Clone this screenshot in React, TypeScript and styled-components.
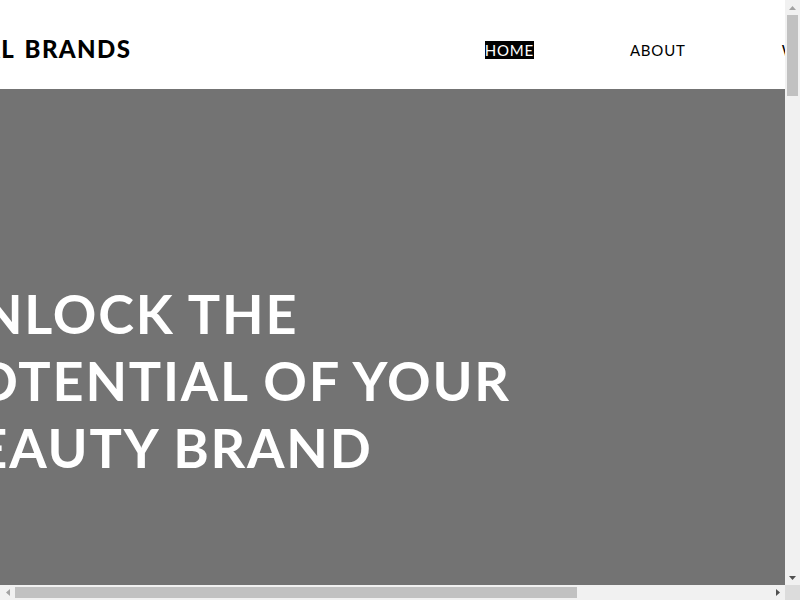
import styled, { createGlobalStyle } from 'styled-components'

const GlobalStyle = createGlobalStyle`
  html, body {
    margin: 0;
    padding: 0;
    overflow: hidden;
  }
  body {
    font-family: Lato, "Liberation Sans", sans-serif;
    color: #000;
    background: #fff;
  }
`

// window frame: page area plus the classic scrollbars
const Frame = styled.div`
  width: 100vw;
  height: 100vh;
  display: grid;
  grid-template-columns: 1fr 15px;
  grid-template-rows: 1fr 15px;
`

const Viewport = styled.div`
  overflow: auto;
  scrollbar-width: none;
  &::-webkit-scrollbar {
    display: none;
  }
`

const ScrollBar = styled.div<{ $vertical?: boolean }>`
  display: flex;
  flex-direction: ${(p) => (p.$vertical ? 'column' : 'row')};
  background: #f1f1f1;
`

const ScrollButton = styled.div`
  flex: 0 0 15px;
  width: 15px;
  height: 15px;
  display: flex;
  align-items: center;
  justify-content: center;
`

const Track = styled.div<{ $vertical?: boolean }>`
  flex: 1;
  display: flex;
  flex-direction: ${(p) => (p.$vertical ? 'column' : 'row')};
  padding: ${(p) => (p.$vertical ? '0 2px' : '2px 0')};
`

const Thumb = styled.div`
  background: #c1c1c1;
`

const Corner = styled.div`
  background: #dcdcdc;
`

const Page = styled.div`
  width: 1131px;
  margin-left: -76px;
`

const SiteHeader = styled.header`
  height: 89px;
  box-sizing: border-box;
  padding: 10px 52px 0 59px;
  display: flex;
  align-items: center;
  justify-content: space-between;
  background: #fff;
`

const Brand = styled.a`
  font-family: Lato, "Liberation Sans", sans-serif;
  font-weight: 900;
  font-size: 24px;
  letter-spacing: 1.4px;
  word-spacing: 3px;
  color: #000;
  margin-top: -2px;
`

const NavList = styled.ul`
  list-style: none;
  display: flex;
  gap: 96px;
  margin: 0;
  padding: 0;
`

const NavLink = styled.a<{ $active?: boolean }>`
  display: block;
  font-size: 15px;
  line-height: 18px;
  letter-spacing: 0.8px;
  color: ${(p) => (p.$active ? '#fff' : '#000')};
  background: ${(p) => (p.$active ? '#000' : 'transparent')};
`

const Hero = styled.section`
  height: 582px;
  padding: 0 15px;
  display: flex;
  align-items: center;
  background: #737373;
`

const HeroTitle = styled.h1`
  margin: 0;
  font-family: Lato, "Liberation Sans", sans-serif;
  font-weight: 700;
  font-size: 54px;
  line-height: 67px;
  letter-spacing: 1.8px;
  color: #fff;
`

const Section = styled.section<{ $dark?: boolean }>`
  height: 1110px;
  background: ${(p) => (p.$dark ? '#737373' : '#fff')};
`

const links = ['HOME', 'ABOUT', 'WORK', 'CONTACT']

type Dir = 'up' | 'down' | 'left' | 'right'

const arrowPoints: Record<Dir, string> = {
  up: '0,4 7,4 3.5,0',
  down: '0,0 7,0 3.5,4',
  left: '4,0 4,7 0,3.5',
  right: '0,0 0,7 4,3.5',
}

const Arrow = ({ dir, disabled }: { dir: Dir; disabled?: boolean }) => {
  const flat = dir === 'up' || dir === 'down'
  return (
    <ScrollButton>
      <svg width={flat ? 7 : 4} height={flat ? 4 : 7}>
        <polygon points={arrowPoints[dir]} fill={disabled ? '#a3a3a3' : '#505050'} />
      </svg>
    </ScrollButton>
  )
}

const App = () => {
  return (
    <Frame>
      <GlobalStyle />
      <Viewport>
        <Page>
          <SiteHeader>
            <Brand>AL BRANDS</Brand>
            <nav>
              <NavList>
                {links.map((l, i) => (
                  <li key={l}>
                    <NavLink $active={i === 0}>{l}</NavLink>
                  </li>
                ))}
              </NavList>
            </nav>
          </SiteHeader>
          <Hero>
            <HeroTitle>
              UNLOCK THE
              <br />
              POTENTIAL OF YOUR
              <br />
              BEAUTY BRAND
            </HeroTitle>
          </Hero>
          <Section />
          <Section $dark />
          <Section />
        </Page>
      </Viewport>
      <ScrollBar $vertical>
        <Arrow dir="up" disabled />
        <Track $vertical>
          <Thumb style={{ height: 81 }} />
        </Track>
        <Arrow dir="down" />
      </ScrollBar>
      <ScrollBar>
        <Arrow dir="left" disabled />
        <Track>
          <Thumb style={{ width: 562 }} />
        </Track>
        <Arrow dir="right" />
      </ScrollBar>
      <Corner />
    </Frame>
  )
}

export default App
